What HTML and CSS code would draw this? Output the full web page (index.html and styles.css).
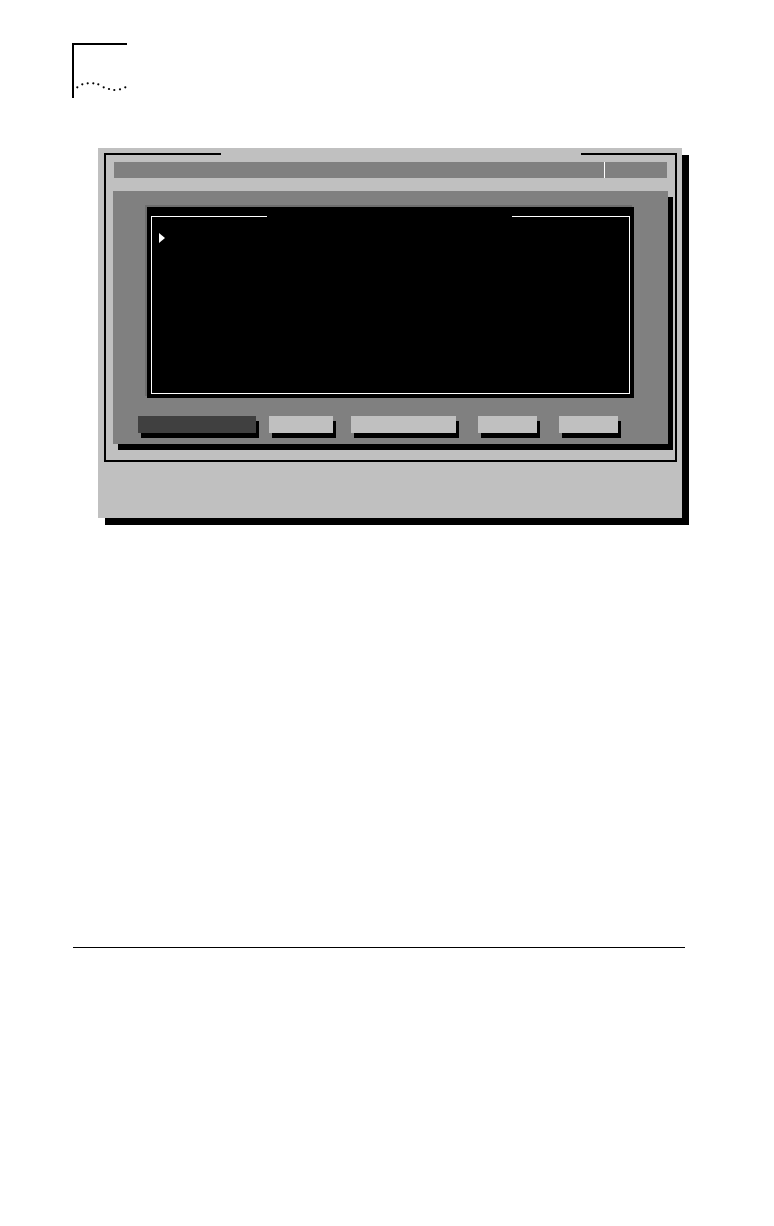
FILE: index.html
```html
<!DOCTYPE html>
<html lang="en">
<head>
<meta charset="utf-8">
<title>Screen</title>
<link rel="stylesheet" href="styles.css">
</head>
<body>
<div class="page">
  <svg class="corner-mark" width="58" height="58" viewBox="0 0 58 58" aria-hidden="true">
    <rect x="0" y="0" width="2" height="55" fill="#000"/>
    <rect x="0" y="0" width="55" height="2" fill="#000"/>
    <g fill="#000">
      <circle cx="5.3" cy="44.3" r="1.1"/>
      <circle cx="10.3" cy="41.3" r="1.1"/>
      <circle cx="15.7" cy="40.3" r="1.1"/>
      <circle cx="21.3" cy="40.3" r="1.1"/>
      <circle cx="26.3" cy="41.3" r="1.1"/>
      <circle cx="31.7" cy="44.3" r="1.1"/>
      <circle cx="37" cy="46" r="1.1"/>
      <circle cx="42.3" cy="47" r="1.1"/>
      <circle cx="48" cy="46.3" r="1.1"/>
      <circle cx="53.3" cy="44.3" r="1.1"/>
    </g>
  </svg>

  <div class="screen">
    <div class="frame">
      <div class="frame-top">
        <span class="line-seg frame-seg-left"></span>
        <span class="frame-gap"></span>
        <span class="line-seg frame-seg-right"></span>
      </div>
      <div class="titlebar">
        <div class="title-main"></div>
        <div class="title-side"></div>
      </div>
      <div class="dialog">
        <div class="list">
          <div class="list-frame">
            <div class="list-top">
              <span class="white-seg list-seg-left"></span>
              <span class="list-gap"></span>
              <span class="white-seg list-seg-right"></span>
            </div>
            <svg class="pointer" width="6" height="10" viewBox="0 0 6 10" aria-hidden="true">
              <polygon points="0,0 6,5 0,10" fill="#fff"/>
            </svg>
          </div>
        </div>
        <div class="buttons">
          <div class="btn btn-active btn-w1"></div>
          <div class="btn btn-w2"></div>
          <div class="btn btn-w3"></div>
          <div class="btn btn-w4"></div>
          <div class="btn btn-w5"></div>
        </div>
      </div>
    </div>
    <div class="status"></div>
  </div>

  <div class="rule"></div>
</div>
</body>
</html>
```

FILE: styles.css
```css
html, body {
  margin: 0;
  padding: 0;
  background: #fff;
  font-family: "Liberation Sans", Arial, sans-serif;
}

.page {
  padding: 43px 0 0 72px;
}

.corner-mark {
  display: block;
}

.screen {
  box-sizing: border-box;
  width: 584px;
  height: 370px;
  margin: 47px 0 0 26px;
  padding: 5px 5px 0 6px;
  background: #c0c0c0;
  box-shadow: 7px 7px 0 #000;
}

.frame {
  box-sizing: border-box;
  width: 573px;
  height: 309px;
  border: 2px solid #000;
  border-top: 0;
}

.frame-top {
  display: flex;
  height: 2px;
}

.line-seg {
  display: block;
  height: 2px;
  background: #000;
}

.frame-seg-left {
  flex: 0 0 115px;
}

.frame-gap {
  flex: 0 0 360px;
}

.frame-seg-right {
  flex: 1 1 auto;
}

.titlebar {
  display: flex;
  height: 16px;
  margin: 7px 8px 0 8px;
  background: #808080;
}

.title-main {
  flex: 1 1 auto;
  border-right: 1px solid #fff;
}

.title-side {
  flex: 0 0 62px;
}

.dialog {
  box-sizing: border-box;
  height: 253px;
  margin: 13px 7px 0 7px;
  padding-top: 16px;
  background: #808080;
  box-shadow: 5px 6px 0 #000;
}

.list {
  box-sizing: border-box;
  height: 191px;
  margin: 0 34px;
  padding: 9px 4px 4px 4px;
  background: #000;
  box-shadow: -2px -2px 0 #6e6e6e;
}

.list-frame {
  box-sizing: border-box;
  height: 100%;
  border: 1px solid #fff;
  border-top: 0;
}

.list-top {
  display: flex;
  height: 1px;
}

.white-seg {
  display: block;
  height: 1px;
  background: #fff;
}

.list-seg-left {
  flex: 0 0 115px;
}

.list-gap {
  flex: 0 0 245px;
}

.list-seg-right {
  flex: 1 1 auto;
}

.pointer {
  display: block;
  margin: 16px 0 0 7px;
}

.buttons {
  display: flex;
  margin-top: 18px;
  padding-left: 25px;
}

.btn {
  height: 17px;
  background: #c0c0c0;
  box-shadow: 3px 5px 0 #000;
}

.btn-active {
  background: #404040;
}

.btn-w1 { width: 118px; }
.btn-w2 { width: 64px; margin-left: 13px; }
.btn-w3 { width: 105px; margin-left: 18px; }
.btn-w4 { width: 59px; margin-left: 22px; }
.btn-w5 { width: 59px; margin-left: 22px; }

.status {
  height: 56px;
}

.rule {
  width: 612px;
  margin: 429px 0 0 1px;
  border-top: 1px solid #000;
}
```
